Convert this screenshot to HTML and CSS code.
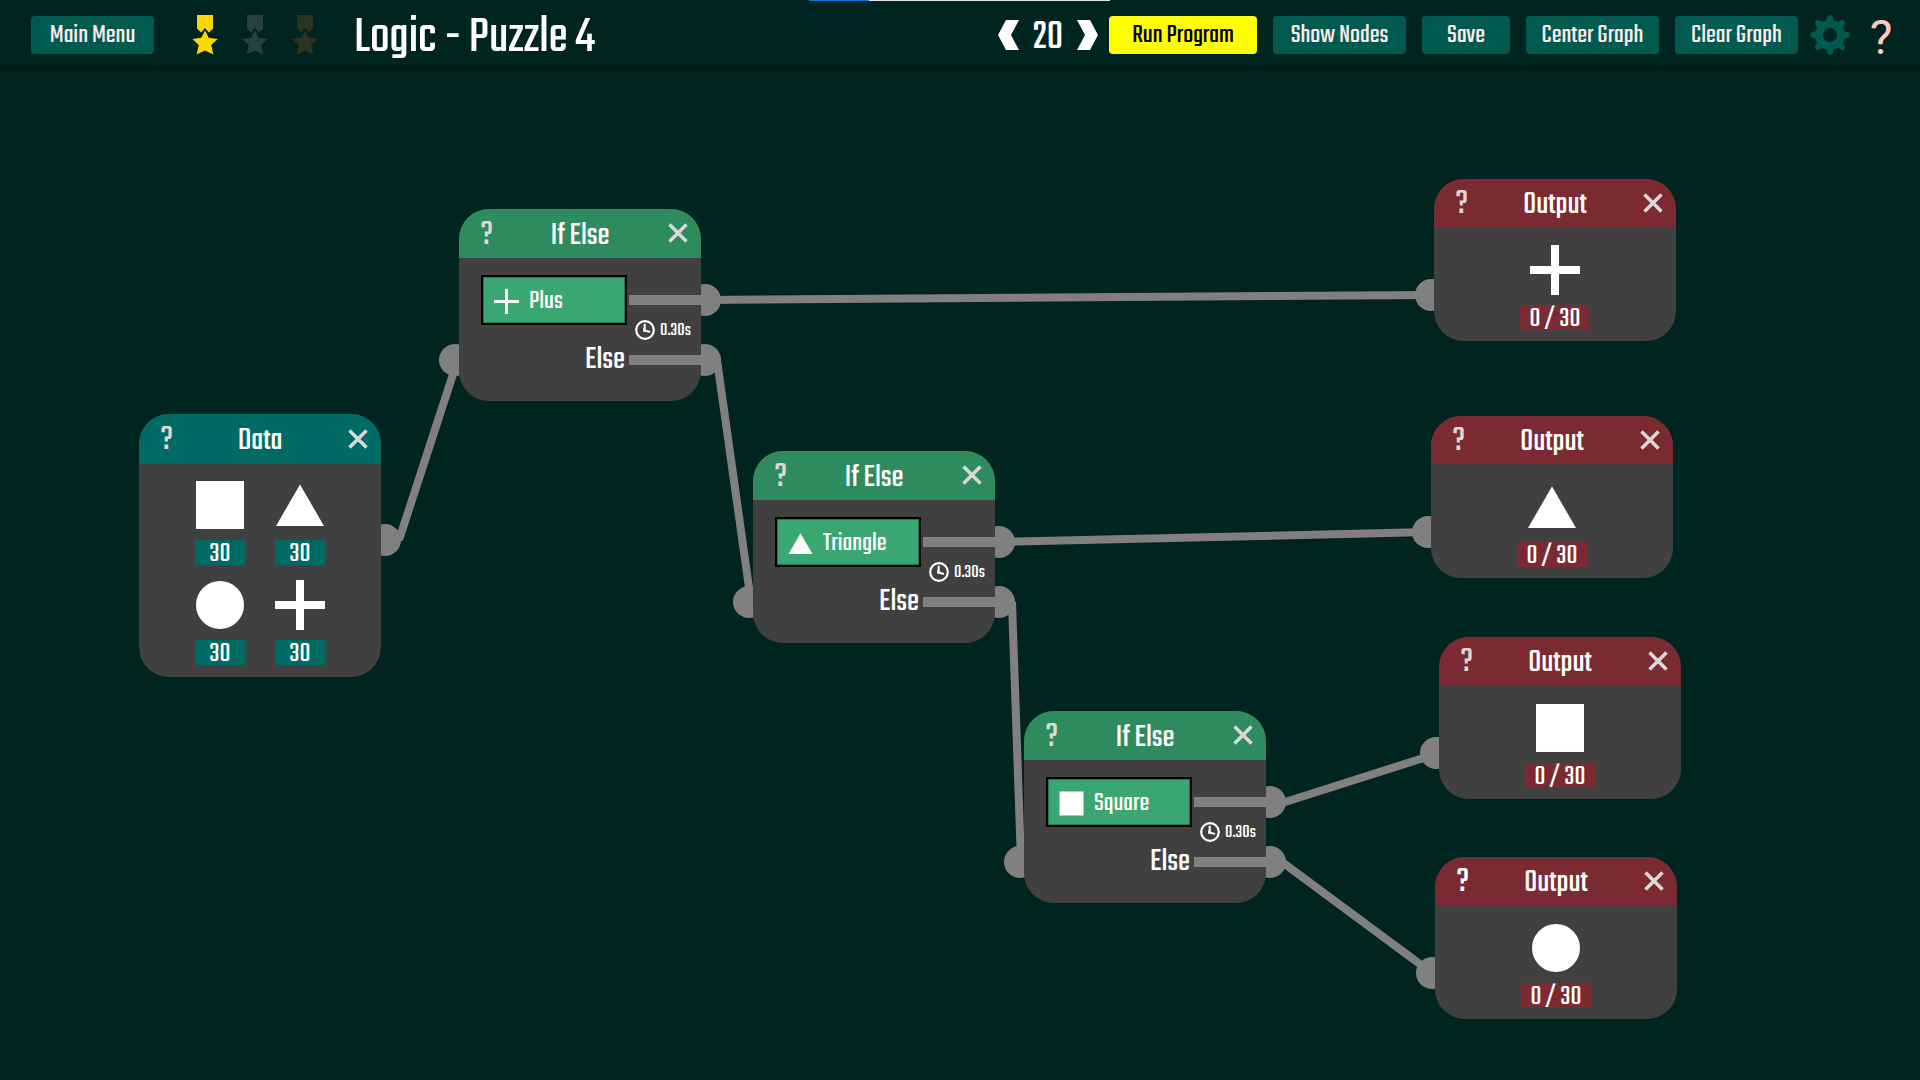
FILE: index.html
```html
<!DOCTYPE html>
<html lang="en">
<head>
<meta charset="utf-8">
<title>Logic - Puzzle 4</title>
<link rel="stylesheet" href="styles.css">
</head>
<body>
<svg class="defs" aria-hidden="true">
  <symbol id="square" viewBox="0 0 50 50"><rect x="1" y="1" width="48" height="48"/></symbol>
  <symbol id="circle" viewBox="0 0 50 50"><circle cx="25" cy="25" r="24"/></symbol>
  <symbol id="triangle" viewBox="0 0 50 50"><path d="M25 4.500L49 46H1z"/></symbol>
  <symbol id="plus" viewBox="0 0 50 50"><path d="M21 0h8v21h21v8H29v21h-8V29H0v-8h21z"/></symbol>
  <symbol id="plus-thin" viewBox="0 0 50 50"><path d="M22 0h6v22h22v6H28v22h-6V28H0v-6h22z"/></symbol>
  <symbol id="close" viewBox="0 0 20 20"><path d="M1.500 1.500L18.500 18.500M18.500 1.500L1.500 18.500" fill="none" stroke="currentColor" stroke-width="3.500"/></symbol>
  <symbol id="clock" viewBox="0 0 20 20"><g fill="none" stroke="currentColor"><circle cx="10" cy="10" r="8.800" stroke-width="2.200"/><path d="M9.700 3.800V10.500L15 12" stroke-width="2"/></g><path d="M8.500 7.500L13 11.500L8 11.700z"/></symbol>
  <symbol id="medal" viewBox="0 0 26 40"><path d="M5 0h16v13.500l-4.200 4L13 13l-3.800 4.500L5 13.500z"/><path d="M13 15.500l3.700 7.300 9 1.200-6.500 5.900 2.200 9.600L13 35.500l-8.400 4 2.200-9.600L.3 24l9-1.200z"/></symbol>
  <symbol id="gear" viewBox="0 0 40 40"><path fill-rule="evenodd" d="M17.300 1.500Q20-1.500 22.700 1.500L23.500 5.200L28 7.100L31.500 5Q35.500 4.500 35 8.500L32.900 12L34.800 16.500L38.500 17.300Q41.500 20 38.500 22.700L34.800 23.500L32.900 28L35 31.500Q35.500 35.500 31.500 35L28 32.900L23.500 34.800L22.700 38.500Q20 41.500 17.300 38.500L16.500 34.800L12 32.900L8.500 35Q4.500 35.500 5 31.500L7.100 28L5.200 23.500L1.500 22.700Q-1.500 20 1.500 17.300L5.200 16.500L7.100 12L5 8.500Q4.500 4.500 8.500 5L12 7.100L16.500 5.200zM20 13a7 7 0 1 0 0 14a7 7 0 1 0 0-14z"/></symbol>
  <symbol id="prev" viewBox="0 0 21 30"><path d="M8 0h13l-8 15 8 15H8L0 15z"/></symbol>
  <symbol id="next" viewBox="0 0 21 30"><path d="M13 0H0l8 15-8 15h13l8-15z"/></symbol>
</svg>

<header class="toolbar">
  <button class="btn btn-menu">Main Menu</button>
  <div class="medals">
    <svg class="medal gold"><use href="#medal"/></svg>
    <svg class="medal silver"><use href="#medal"/></svg>
    <svg class="medal bronze"><use href="#medal"/></svg>
  </div>
  <h1 class="title">Logic - Puzzle 4</h1>
  <div class="speed">
    <button class="arrow" aria-label="Slower"><svg><use href="#prev"/></svg></button>
    <span class="speed-value">20</span>
    <button class="arrow" aria-label="Faster"><svg><use href="#next"/></svg></button>
  </div>
  <div class="actions">
    <button class="btn btn-run">Run Program</button>
    <button class="btn btn-wide">Show Nodes</button>
    <button class="btn btn-save">Save</button>
    <button class="btn btn-wide">Center Graph</button>
    <button class="btn btn-menu">Clear Graph</button>
  </div>
  <button class="gear" aria-label="Settings"><svg><use href="#gear"/></svg></button>
  <button class="help-main">?</button>
  <div class="progress"><div class="progress-fill"></div></div>
</header>

<main class="board">
  <svg class="wires" aria-hidden="true">
    <g class="ports">
      <circle cx="385" cy="470" r="16"/>
      <circle cx="455" cy="290" r="16"/><circle cx="705" cy="230" r="16"/><circle cx="705" cy="290" r="16"/>
      <circle cx="749" cy="532" r="16"/><circle cx="999" cy="472" r="16"/><circle cx="999" cy="532" r="16"/>
      <circle cx="1020" cy="792" r="16"/><circle cx="1270" cy="732" r="16"/><circle cx="1270" cy="792" r="16"/>
      <circle cx="1431" cy="225" r="16"/><circle cx="1428" cy="462" r="16"/><circle cx="1436" cy="683" r="16"/><circle cx="1432" cy="903" r="16"/>
    </g>
    <g class="lines">
      <path d="M399 470L457 292"/>
      <path d="M705 230L1431 225"/>
      <path d="M717 290L751 532"/>
      <path d="M999 472L1428 462"/>
      <path d="M1012 532L1021 792"/>
      <path d="M1282 733L1436 684"/>
      <path d="M1282 792L1432 903"/>
    </g>
  </svg>

  <section class="node data n-data">
    <header class="node-head"><button class="help">?</button><h2>Data</h2><button class="close" aria-label="Remove"><svg><use href="#close"/></svg></button></header>
    <div class="shapes">
      <div class="shape"><svg><use href="#square"/></svg><span class="count">30</span></div>
      <div class="shape"><svg><use href="#triangle"/></svg><span class="count">30</span></div>
      <div class="shape"><svg><use href="#circle"/></svg><span class="count">30</span></div>
      <div class="shape"><svg><use href="#plus"/></svg><span class="count">30</span></div>
    </div>
  </section>

  <section class="node ifelse n-if1">
    <header class="node-head"><button class="help">?</button><h2>If Else</h2><button class="close" aria-label="Remove"><svg><use href="#close"/></svg></button></header>
    <div class="branches">
      <div class="conditions"><button class="pick"><svg><use href="#plus-thin"/></svg>Plus</button><span class="else">Else</span></div>
      <div class="leads"><i class="lead"></i><span class="timer"><svg><use href="#clock"/></svg>0.30s</span><i class="lead"></i></div>
    </div>
  </section>

  <section class="node ifelse n-if2">
    <header class="node-head"><button class="help">?</button><h2>If Else</h2><button class="close" aria-label="Remove"><svg><use href="#close"/></svg></button></header>
    <div class="branches">
      <div class="conditions"><button class="pick"><svg><use href="#triangle"/></svg>Triangle</button><span class="else">Else</span></div>
      <div class="leads"><i class="lead"></i><span class="timer"><svg><use href="#clock"/></svg>0.30s</span><i class="lead"></i></div>
    </div>
  </section>

  <section class="node ifelse n-if3">
    <header class="node-head"><button class="help">?</button><h2>If Else</h2><button class="close" aria-label="Remove"><svg><use href="#close"/></svg></button></header>
    <div class="branches">
      <div class="conditions"><button class="pick"><svg><use href="#square"/></svg>Square</button><span class="else">Else</span></div>
      <div class="leads"><i class="lead"></i><span class="timer"><svg><use href="#clock"/></svg>0.30s</span><i class="lead"></i></div>
    </div>
  </section>

  <section class="node output n-out1">
    <header class="node-head"><button class="help">?</button><h2>Output</h2><button class="close" aria-label="Remove"><svg><use href="#close"/></svg></button></header>
    <div class="shape"><svg><use href="#plus"/></svg><span class="count">0 / 30</span></div>
  </section>
  <section class="node output n-out2">
    <header class="node-head"><button class="help">?</button><h2>Output</h2><button class="close" aria-label="Remove"><svg><use href="#close"/></svg></button></header>
    <div class="shape"><svg><use href="#triangle"/></svg><span class="count">0 / 30</span></div>
  </section>
  <section class="node output n-out3">
    <header class="node-head"><button class="help">?</button><h2>Output</h2><button class="close" aria-label="Remove"><svg><use href="#close"/></svg></button></header>
    <div class="shape"><svg><use href="#square"/></svg><span class="count">0 / 30</span></div>
  </section>
  <section class="node output n-out4">
    <header class="node-head"><button class="help active">?</button><h2>Output</h2><button class="close" aria-label="Remove"><svg><use href="#close"/></svg></button></header>
    <div class="shape"><svg><use href="#circle"/></svg><span class="count">0 / 30</span></div>
  </section>
</main>
</body>
</html>
```
FILE: styles.css
```css
* { box-sizing: border-box; }

body {
  margin: 0;
  min-height: 100vh;
  display: flex;
  flex-direction: column;
  background: #002420;
  color: #fff;
  font-family: "Teko", "Liberation Sans Narrow", "Roboto Condensed", "Open Sans Condensed", sans-serif;
}

button {
  margin: 0;
  padding: 0;
  border: 0;
  background: none;
  color: inherit;
  font: inherit;
  cursor: pointer;
}

svg { display: block; fill: currentColor; }
h1, h2 { margin: 0; font-weight: 400; }
.defs { position: absolute; width: 0; height: 0; }

/* toolbar */
.toolbar {
  position: relative;
  display: flex;
  align-items: center;
  height: 70px;
  padding: 4px 26px 0 31px;
  border-bottom: 4px solid #001a17;
}
.btn {
  height: 38px;
  padding-top: 2px;
  border-radius: 4px;
  background: #005a50;
  color: #fbeae8;
  font-size: 27px;
  line-height: 36px;
  white-space: nowrap;
}
.btn-menu { width: 123px; }
.btn-wide { width: 133px; }
.btn-save { width: 88px; }
.btn-run { width: 148px; background: #ff0; color: #000; }
.medals { display: flex; gap: 24px; margin-left: 38px; }
.medal { width: 26px; height: 40px; }
.gold { color: #ffd700; }
.silver { color: #264240; }
.bronze { color: #2b3321; }
.title { margin-left: 36px; padding-top: 6px; font-size: 53px; line-height: 54px; white-space: nowrap; }
.speed { display: flex; align-items: center; gap: 16px; margin-left: auto; margin-right: 11px; }
.arrow svg { width: 21px; height: 30px; }
.speed-value { display: flex; justify-content: center; width: 26px; padding-top: 6px; font-size: 42px; line-height: 54px; }
.actions { display: flex; gap: 16px; }
.gear { margin-left: 12px; color: #005a50; }
.gear svg { width: 40px; height: 40px; }
.help-main { width: 26px; margin-left: 18px; padding-top: 6px; color: #ffc8c0; font-family: Roboto, sans-serif; font-size: 48px; font-weight: 400; line-height: 56px; }
.progress {
  position: absolute;
  top: 0;
  left: 809px;
  width: 301px;
  height: 1px;
  background: #e6e6e6;
}
.progress-fill { width: 60px; height: 1px; background: #0078d7; }

/* board */
.board { position: relative; flex: 1; }
.wires { position: absolute; inset: 0; width: 100%; height: 100%; }
.ports { fill: #808080; }
.lines { fill: none; stroke: #808080; stroke-width: 8; }

.node {
  position: absolute;
  width: 242px;
  border-radius: 30px;
  background: #404040;
  overflow: hidden;
}
.n-data { left: 139px; top: 344px; }
.n-if1 { left: 459px; top: 139px; }
.n-if2 { left: 753px; top: 381px; }
.n-if3 { left: 1024px; top: 641px; }
.n-out1 { left: 1434px; top: 109px; }
.n-out2 { left: 1431px; top: 346px; }
.n-out3 { left: 1439px; top: 567px; }
.n-out4 { left: 1435px; top: 787px; }

.node-head {
  display: grid;
  grid-template-columns: 1fr auto 1fr;
  align-items: center;
  height: 49px;
  padding: 0 13px;
}
.output .node-head { height: 48px; }
.node-head h2 { padding-top: 4px; font-size: 33px; line-height: 44px; }
.help { width: 16px; justify-self: start; margin-left: 7px; padding-top: 3px; color: #ddd8d6; font-size: 36px; line-height: 45px; }
.help.active { color: #fff; }
.close { justify-self: end; padding-bottom: 1px; color: #ddd8d8; }
.close svg { width: 20px; height: 20px; }

.data .node-head, .data .count { background: #006b65; }
.data .node-head { height: 50px; }
.ifelse .node-head { background: #2e8b5e; }
.output .node-head, .output .count { background: #7b2a31; }

.shape { display: grid; justify-items: center; gap: 10px; }
.shape svg { width: 50px; height: 50px; }
.count { width: 50px; height: 25px; font-size: 28px; line-height: 28px; text-align: center; }
.output .count { width: 70px; }
.output .shape { padding: 18px 0 11px; }
.shapes {
  display: grid;
  grid-template-columns: 50px 50px;
  justify-content: center;
  gap: 15px 30px;
  padding: 16px 0 12px;
}

.branches { display: flex; height: 143px; padding: 17px 0 0 22px; }
.conditions { display: flex; flex-direction: column; gap: 20px; width: 146px; }
.pick {
  display: flex;
  align-items: center;
  gap: 10px;
  height: 50px;
  padding: 2px 11px 0;
  border: 2px solid #000;
  background: #3aa671;
  box-shadow: inset 0 0 0 1px #237a4e;
  font-size: 27px;
}
.pick svg { width: 25px; height: 25px; }
.else { padding-right: 2px; font-size: 33px; line-height: 30px; text-align: right; }
.leads { display: flex; flex-direction: column; gap: 15px; flex: 1; padding: 20px 0 0 2px; }
.lead { height: 10px; background: #808080; }
.timer { display: flex; align-items: center; gap: 5px; height: 20px; padding-left: 6px; font-size: 19px; }
.timer svg { width: 20px; height: 20px; }
```
